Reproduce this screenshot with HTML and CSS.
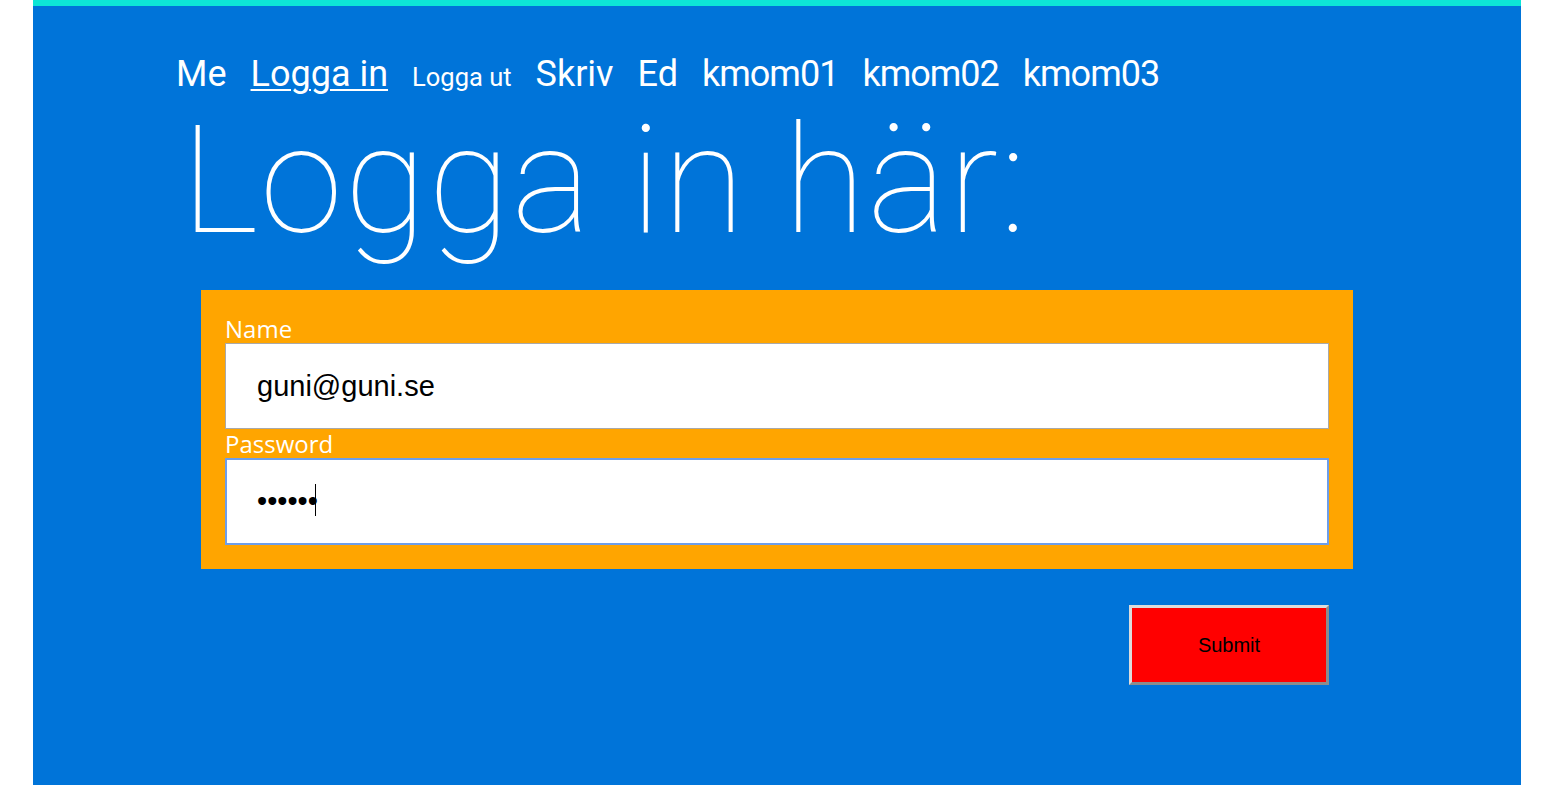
FILE: index.html
```html
<!DOCTYPE html>
<html lang="sv">
<head>
<meta charset="utf-8">
<title>Logga in</title>
<link rel="stylesheet" href="styles.css">
</head>
<body>
<div class="page">
  <nav class="nav">
    <a class="nav-link" href="#">Me</a>
    <a class="nav-link current" href="#">Logga in</a>
    <a class="nav-link small" href="#">Logga ut</a>
    <a class="nav-link" href="#">Skriv</a>
    <a class="nav-link" href="#">Ed</a>
    <a class="nav-link kmom" href="#">kmom01</a>
    <a class="nav-link kmom" href="#">kmom02</a>
    <a class="nav-link kmom" href="#">kmom03</a>
  </nav>
  <h1 class="title">Logga in här:</h1>
  <form class="login">
    <div class="fields">
      <label class="label" for="name">Name</label>
      <input class="field" id="name" type="text" value="guni@guni.se">
      <label class="label" for="pw">Password</label>
      <div class="field-wrap">
        <input class="field active" id="pw" type="password" value="abcdef">
        <span class="caret"></span>
      </div>
    </div>
    <div class="actions">
      <button class="submit" type="button">Submit</button>
    </div>
  </form>
</div>
</body>
</html>
```

FILE: styles.css
```css
html, body {
  margin: 0;
  padding: 0;
  background: #ffffff;
}

.page {
  width: 1488px;
  height: 732px;
  margin: 0 auto;
  background: #0074d9;
  border-top: 6px solid #0de6d6;
  padding-top: 47px;
  box-sizing: content-box;
  font-family: Roboto, "Liberation Sans", sans-serif;
}

.nav {
  display: flex;
  align-items: baseline;
  gap: 24px;
  padding-left: 143px;
  height: 42px;
}

.nav-link {
  color: #ffffff;
  text-decoration: none;
  font-size: 36px;
  line-height: 42px;
}

.nav-link.small {
  font-size: 25.5px;
}

.nav-link.kmom {
  letter-spacing: -1px;
}

.nav-link.current {
  text-decoration: underline;
  text-decoration-thickness: 2px;
  text-underline-offset: 3px;
}

.title {
  margin: 11px 0 0 148px;
  font-family: Roboto, "Liberation Sans", sans-serif;
  font-weight: 100;
  font-size: 150px;
  line-height: 150px;
  color: #ffffff;
  letter-spacing: 1.6px;
}

.login {
  margin: 34px 168px 0;
}

.fields {
  background: #ffa500;
  padding: 24px;
  display: flex;
  flex-direction: column;
}

.label {
  font-family: "Open Sans", "Noto Sans", sans-serif;
  font-size: 24px;
  line-height: 29px;
  color: #ffffff;
}

.field-wrap {
  position: relative;
}

.field {
  display: block;
  width: 100%;
  box-sizing: border-box;
  height: 86px;
  margin: 0;
  padding: 0 31px;
  border: 1px solid #a9a9a9;
  background: #ffffff;
  font-family: "Liberation Sans", Arial, sans-serif;
  font-size: 29px;
  color: #000000;
  outline: none;
}

.field.active {
  height: 87px;
  border: 2px solid #6d9eea;
  padding-left: 30px;
}

.caret {
  position: absolute;
  left: 90px;
  top: 26px;
  width: 1px;
  height: 32px;
  background: #000000;
}

.actions {
  display: flex;
  justify-content: flex-end;
  padding: 36px 24px 0;
}

.submit {
  width: 200px;
  height: 80px;
  background: #ff0000;
  border-style: solid;
  border-width: 3px;
  border-color: #dcdcdc #8c8c8c #8c8c8c #dcdcdc;
  font-family: "Liberation Sans", Arial, sans-serif;
  font-size: 20px;
  color: #000000;
  padding: 0;
}
```
